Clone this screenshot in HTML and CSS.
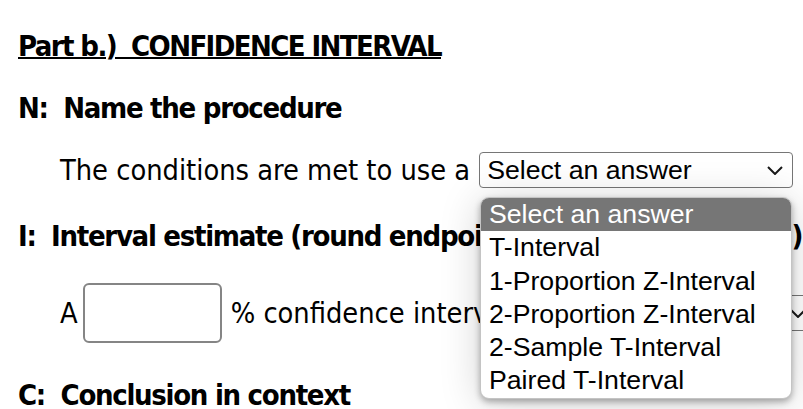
FILE: index.html
```html
<!DOCTYPE html>
<html lang="en">
<head>
    <meta charset="UTF-8">
    <meta name="viewport" content="width=device-width, initial-scale=1.0">
    <title>Part b.) Confidence Interval</title>
    <link rel="stylesheet" href="styles.css">
</head>
<body>
    <div class="page">
        <h2 class="part"><span class="under">Part b.)&nbsp; CONFIDENCE INTERVAL</span></h2>

        <h3 class="step">N:&nbsp; Name the procedure</h3>
        <div class="answer">
            <span class="lead">The conditions are met to use a</span>
            <span class="select">
                <span class="select-text">Select an answer</span>
                <svg class="chevron" width="16" height="9" viewBox="0 0 16 9"><polyline points="1,1 8,8 15,1" fill="none" stroke="#1a1a1a" stroke-width="2"/></svg>
            </span>
        </div>

        <h3 class="step">I:&nbsp; Interval estimate (round endpoints to 3 decimal places)</h3>
        <div class="answer tall">
            <span>A</span>
            <input class="pct" type="text">
            <span class="lead">% confidence interval</span>
            <span class="select short">
                <span class="select-text">Select an answer</span>
                <svg class="chevron" width="16" height="9" viewBox="0 0 16 9"><polyline points="1,1 8,8 15,1" fill="none" stroke="#1a1a1a" stroke-width="2"/></svg>
            </span>
        </div>

        <h3 class="step">C:&nbsp; Conclusion in context</h3>

        <!-- open list of the first select -->
        <ul class="dropdown">
            <li class="active">Select an answer</li>
            <li>T-Interval</li>
            <li>1-Proportion Z-Interval</li>
            <li>2-Proportion Z-Interval</li>
            <li>2-Sample T-Interval</li>
            <li>Paired T-Interval</li>
        </ul>
    </div>
</body>
</html>
```

FILE: styles.css
```css
html, body {
    margin: 0;
    padding: 0;
    overflow: hidden;
    background: #fff;
}

.page {
    position: relative;
    padding: 15px 0 0 18px;
    font-family: "DejaVu Sans", "Open Sans", sans-serif;
    font-stretch: condensed;
    font-size: 28.7px;
    color: #000;
    white-space: nowrap;
}

.part, .step {
    margin: 0;
    font-size: 29px;
    font-weight: bold;
    letter-spacing: -1.3px;
    line-height: 62px;
}

.part {
    letter-spacing: -1.6px;
}

.under {
    text-decoration: underline;
    text-decoration-thickness: 2px;
}

.answer {
    display: flex;
    align-items: center;
    height: 62px;
    padding-left: 42px;
}

.answer .lead {
    margin-right: 9px;
}

.step + .answer + .step {
    margin-top: 4px;
}

.answer.tall {
    height: 60px;
    padding: 16px 0 17px 42px;
}

.select {
    display: inline-flex;
    align-items: center;
    justify-content: space-between;
    box-sizing: border-box;
    width: 314px;
    height: 36px;
    padding: 0 9px 0 7px;
    border: 1px solid #767676;
    border-radius: 4px;
    font-family: "Liberation Sans", Arial, sans-serif;
    font-stretch: normal;
    font-size: 26.67px;
    line-height: 34px;
    flex-shrink: 0;
}

.select.short {
    width: 296px;
}

.pct {
    box-sizing: border-box;
    width: 139px;
    height: 60px;
    margin: 0 9px 0 5px;
    border: 2px solid #858585;
    border-radius: 6px;
    background: #fff;
}

.dropdown {
    position: absolute;
    left: 480px;
    top: 197px;
    width: 312px;
    box-sizing: border-box;
    margin: 0;
    padding: 0;
    list-style: none;
    background: #fff;
    border: 1px solid #c4c4c4;
    border-radius: 9px;
    overflow: hidden;
    box-shadow: 0 3px 6px rgba(0,0,0,0.3), 0 4px 40px rgba(0,0,0,0.18);
    font-family: "Liberation Sans", Arial, sans-serif;
    font-stretch: normal;
    font-size: 26.67px;
    line-height: 33.3px;
}

.dropdown li {
    padding-left: 8px;
}

.dropdown li.active {
    background: #767676;
    color: #fff;
}
```
